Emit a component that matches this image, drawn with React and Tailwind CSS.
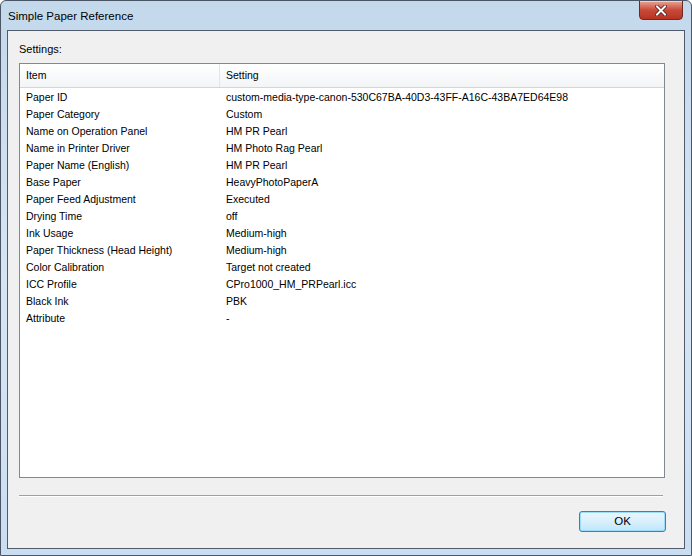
import React from 'react';

const rows = [
  ['Paper ID', 'custom-media-type-canon-530C67BA-40D3-43FF-A16C-43BA7ED64E98'],
  ['Paper Category', 'Custom'],
  ['Name on Operation Panel', 'HM PR Pearl'],
  ['Name in Printer Driver', 'HM Photo Rag Pearl'],
  ['Paper Name (English)', 'HM PR Pearl'],
  ['Base Paper', 'HeavyPhotoPaperA'],
  ['Paper Feed Adjustment', 'Executed'],
  ['Drying Time', 'off'],
  ['Ink Usage', 'Medium-high'],
  ['Paper Thickness (Head Height)', 'Medium-high'],
  ['Color Calibration', 'Target not created'],
  ['ICC Profile', 'CPro1000_HM_PRPearl.icc'],
  ['Black Ink', 'PBK'],
  ['Attribute', '-'],
];

export default function App() {
  return (
    <div
      className="w-[692px] h-[556px] flex flex-col bg-gradient-to-b from-[#c4d8ec] via-[#d6e5f4] to-[#cadef2] border border-[#4a5566] rounded-t-[6px] text-[10.5px] text-black overflow-hidden"
      style={{ fontFamily: '"Liberation Sans", Arial, sans-serif' }}
    >
      {/* title bar */}
      <div className="h-[29px] flex items-start justify-between pl-[7px] pr-[8px]">
        <span className="mt-[8px] text-[11.5px] leading-[14px] text-black">Simple Paper Reference</span>
        <button className="w-[44px] h-[20px] -mt-px rounded-b-[4px] border border-[#6b2a22] bg-gradient-to-b from-[#e8a493] via-[#c8493a] to-[#b8331f] flex items-center justify-center shadow-[inset_0_1px_0_rgba(255,255,255,0.5)]">
          <svg width="12" height="11" viewBox="0 0 12 11">
            <path d="M2 1.5 L10 9.5 M10 1.5 L2 9.5" stroke="#4a1a14" strokeWidth="3.6" strokeLinecap="square" />
            <path d="M2 1.5 L10 9.5 M10 1.5 L2 9.5" stroke="#ffffff" strokeWidth="2" strokeLinecap="square" />
          </svg>
        </button>
      </div>

      {/* client area */}
      <div className="flex-1 mx-[6px] mb-[6px] border border-[#4f5a6b] bg-[#f0f0f0] flex flex-col pl-[11px] pr-[19px]">
        <div className="mt-[11px] h-[14px] leading-[14px] text-[11px]">Settings:</div>
        <div className="mt-[7px] h-[415px] border border-[#828790] bg-white flex flex-col">
          <div className="h-[24px] flex bg-gradient-to-b from-white to-[#f3f4f6] border-b border-[#d5d5d5]">
            <div className="w-[200px] pl-[6px] flex items-center border-r border-[#e3e5e8]">Item</div>
            <div className="flex-1 pl-[6px] flex items-center">Setting</div>
          </div>
          <div className="pt-[1px]">
            {rows.map(([k, v]) => (
              <div key={k} className="h-[17px] flex items-center">
                <div className="w-[200px] pl-[6px] whitespace-nowrap">{k}</div>
                <div className="flex-1 pl-[6px] whitespace-nowrap">{v}</div>
              </div>
            ))}
          </div>
        </div>
        <div className="mt-[17px] mr-[2px] h-[2px] border-t border-[#a0a0a0] border-b border-b-white" />
        <div className="mt-[14px] flex justify-end">
          <button className="w-[87px] h-[21px] mr-[-1px] rounded-[3px] border border-[#3c7fb1] bg-gradient-to-b from-[#eaf6fd] via-[#d9f0fc] to-[#bee6fd] shadow-[inset_0_0_0_1px_#9ddcf9] text-[11.5px] leading-[19px]">
            OK
          </button>
        </div>
      </div>
    </div>
  );
}
